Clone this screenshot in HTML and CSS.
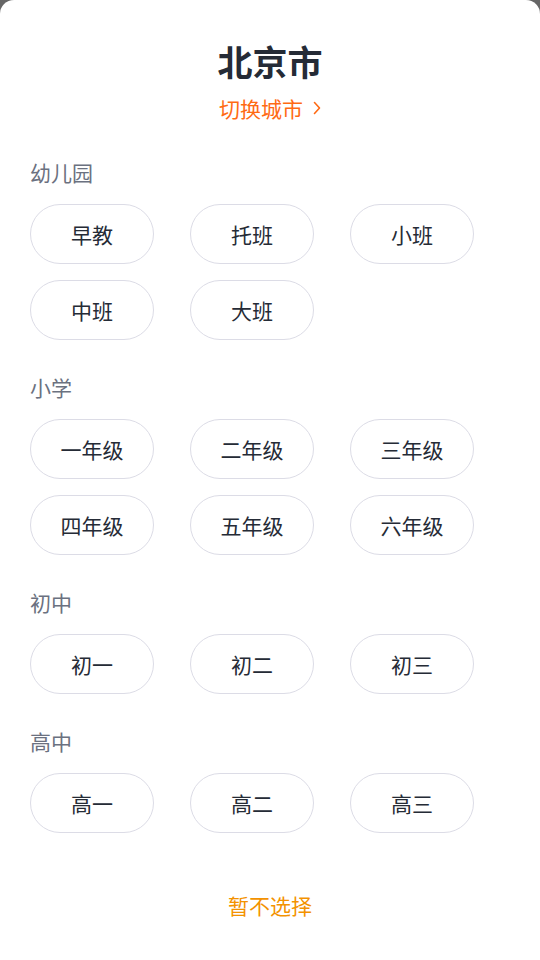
FILE: index.html
```html
<!DOCTYPE html>
<html>
<head>
  <meta charset="utf-8">
  <title>选择年级</title>
  <link rel="stylesheet" href="styles.css">
</head>
<body>
  <div class="sheet">
    <header class="sheet-head">
      <h1 class="city">北京市</h1>
      <a class="switch-city">切换城市
        <svg class="chevron" width="8" height="14" viewBox="0 0 8 14"><path d="M1.5 1.5 L6.5 7 L1.5 12.5" fill="none" stroke="#ff6a13" stroke-width="1.6" stroke-linecap="round" stroke-linejoin="round"/></svg>
      </a>
    </header>

    <section class="group">
      <h2 class="group-title">幼儿园</h2>
      <div class="options">
        <button class="option">早教</button>
        <button class="option">托班</button>
        <button class="option">小班</button>
        <button class="option">中班</button>
        <button class="option">大班</button>
      </div>
    </section>

    <section class="group">
      <h2 class="group-title">小学</h2>
      <div class="options">
        <button class="option">一年级</button>
        <button class="option">二年级</button>
        <button class="option">三年级</button>
        <button class="option">四年级</button>
        <button class="option">五年级</button>
        <button class="option">六年级</button>
      </div>
    </section>

    <section class="group">
      <h2 class="group-title">初中</h2>
      <div class="options">
        <button class="option">初一</button>
        <button class="option">初二</button>
        <button class="option">初三</button>
      </div>
    </section>

    <section class="group">
      <h2 class="group-title">高中</h2>
      <div class="options">
        <button class="option">高一</button>
        <button class="option">高二</button>
        <button class="option">高三</button>
      </div>
    </section>

    <div class="skip">暂不选择</div>
  </div>
</body>
</html>
```

FILE: styles.css
```css
/* 全体 */
body {
  margin: 0;
  background-color: #666;
  font-family: "Noto Sans CJK SC", "Noto Sans", sans-serif;
}

/* ボトムシート */
.sheet {
  background-color: #fff;
  border-radius: 14px 14px 0 0;
  min-height: 960px;
  box-sizing: border-box;
  padding: 39px 30px 0 30px;
}

.sheet-head {
  text-align: center;
  margin-bottom: 36px;
}

.city {
  margin: 0;
  font-size: 35px;
  line-height: 44px;
  font-weight: 700;
  color: #252b36;
}

.switch-city {
  display: inline-flex;
  align-items: center;
  margin-top: 11px;
  font-size: 21px;
  line-height: 28px;
  color: #ff6a13;
  cursor: pointer;
}

.chevron {
  margin-left: 10px;
}

/* グループ */
.group {
  margin-bottom: 33px;
}

.group-title {
  margin: 0 0 18px 0;
  font-size: 21px;
  line-height: 28px;
  font-weight: 400;
  color: #6b7180;
}

.options {
  display: grid;
  grid-template-columns: repeat(3, 124px);
  column-gap: 36px;
  row-gap: 16px;
}

.option {
  height: 60px;
  border: 1px solid #dcdce6;
  border-radius: 30px;
  background-color: #fff;
  font-family: inherit;
  font-size: 21px;
  color: #252b36;
  padding: 0;
}

.skip {
  margin-top: 58px;
  text-align: center;
  font-size: 21px;
  line-height: 28px;
  color: #f39200;
}
```
